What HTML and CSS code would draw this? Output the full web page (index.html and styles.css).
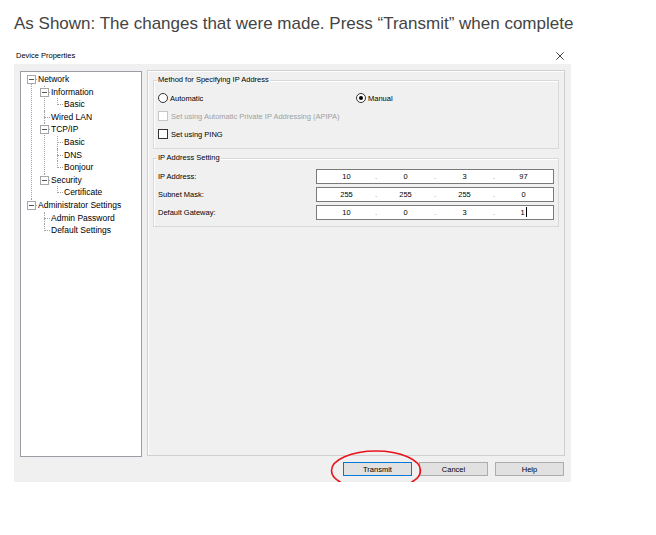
FILE: index.html
```html
<!DOCTYPE html>
<html lang="en">

<head>
    <meta charset="UTF-8">
    <title>Device Properties</title>
    <link rel="stylesheet" href="styles.css">
</head>

<body>
    <p class="intro">As Shown: The changes that were made. Press “Transmit” when complete</p>

    <div class="dialog">
        <div class="titlebar">
            <span>Device Properties</span>
            <svg class="close" width="8" height="8" viewBox="0 0 8 8">
                <path d="M0.5 0.5 L7.5 7.5 M7.5 0.5 L0.5 7.5" stroke="#444" stroke-width="1" fill="none" />
            </svg>
        </div>

        <div class="dialog-body">
            <div class="main">
                <!-- tree on the left -->
                <div class="tree">
                    <ul>
                        <li>
                            <div class="node"><span class="exp"></span>Network</div>
                            <ul>
                                <li>
                                    <div class="node"><span class="exp"></span>Information</div>
                                    <ul>
                                        <li><div class="node">Basic</div></li>
                                    </ul>
                                </li>
                                <li><div class="node">Wired LAN</div></li>
                                <li>
                                    <div class="node"><span class="exp"></span>TCP/IP</div>
                                    <ul>
                                        <li><div class="node">Basic</div></li>
                                        <li><div class="node">DNS</div></li>
                                        <li><div class="node">Bonjour</div></li>
                                    </ul>
                                </li>
                                <li>
                                    <div class="node"><span class="exp"></span>Security</div>
                                    <ul>
                                        <li><div class="node">Certificate</div></li>
                                    </ul>
                                </li>
                            </ul>
                        </li>
                        <li>
                            <div class="node"><span class="exp"></span>Administrator Settings</div>
                            <ul>
                                <li><div class="node">Admin Password</div></li>
                                <li><div class="node">Default Settings</div></li>
                            </ul>
                        </li>
                    </ul>
                </div>

                <!-- settings page -->
                <div class="panel">
                    <fieldset class="group">
                        <legend>Method for Specifying IP Address</legend>
                        <div class="row radios">
                            <label class="opt"><span class="radio"></span>Automatic</label>
                            <label class="opt"><span class="radio checked"></span>Manual</label>
                        </div>
                        <div class="row">
                            <label class="opt disabled"><span class="check"></span>Set using Automatic Private IP Addressing (APIPA)</label>
                        </div>
                        <div class="row">
                            <label class="opt"><span class="check"></span>Set using PING</label>
                        </div>
                    </fieldset>

                    <fieldset class="group">
                        <legend>IP Address Setting</legend>
                        <div class="row field">
                            <span>IP Address:</span>
                            <div class="ipbox">
                                <span class="oct">10</span><span class="dot">.</span>
                                <span class="oct">0</span><span class="dot">.</span>
                                <span class="oct">3</span><span class="dot">.</span>
                                <span class="oct">97</span>
                            </div>
                        </div>
                        <div class="row field">
                            <span>Subnet Mask:</span>
                            <div class="ipbox">
                                <span class="oct">255</span><span class="dot">.</span>
                                <span class="oct">255</span><span class="dot">.</span>
                                <span class="oct">255</span><span class="dot">.</span>
                                <span class="oct">0</span>
                            </div>
                        </div>
                        <div class="row field">
                            <span>Default Gateway:</span>
                            <div class="ipbox">
                                <span class="oct">10</span><span class="dot">.</span>
                                <span class="oct">0</span><span class="dot">.</span>
                                <span class="oct">3</span><span class="dot">.</span>
                                <span class="oct">1<span class="caret"></span></span>
                            </div>
                        </div>
                    </fieldset>
                </div>
            </div>

            <div class="buttons">
                <div class="btn-wrap">
                    <button class="btn focused">Transmit</button>
                    <!-- red mark drawn over the screenshot -->
                    <svg class="highlight" width="94" height="43" viewBox="0 0 94 43">
                        <ellipse cx="47" cy="21.5" rx="44.5" ry="19.5" fill="none" stroke="#e8141b" stroke-width="1.6" />
                    </svg>
                </div>
                <button class="btn">Cancel</button>
                <button class="btn">Help</button>
            </div>
        </div>
    </div>
</body>

</html>
```

FILE: styles.css
```css
body {
    margin: 0;
    background: #fff;
    font-family: "Liberation Sans", Arial, sans-serif;
}

.intro {
    margin: 14px 0 13px 14px;
    font-size: 17px;
    line-height: 20px;
    color: #444;
    white-space: nowrap;
}

.dialog {
    width: 557px;
    margin-left: 14px;
    background: #f0f0f0;
}

.titlebar {
    height: 17px;
    background: #fff;
    display: flex;
    align-items: center;
    justify-content: space-between;
    padding: 0 7px 0 2px;
    font-size: 7.5px;
    color: #000;
}

.close {
    display: block;
}

.dialog-body {
    padding: 6px 6px 6px 6px;
}

.main {
    display: flex;
    gap: 5px;
    align-items: flex-start;
}

/* tree view */
.tree {
    box-sizing: border-box;
    width: 122px;
    height: 386px;
    margin-top: 1px;
    background: #fff;
    border: 1px solid #9a9ea4;
    padding: 1px 0 0 4px;
    font-size: 8.5px;
    color: #000;
}

.tree ul {
    list-style: none;
    margin: 0;
    padding: 0 0 0 13px;
}

.tree > ul {
    padding: 0;
}

.tree li {
    position: relative;
}

.tree li::before {
    content: "";
    position: absolute;
    left: 6px;
    top: 6px;
    width: 6px;
    border-top: 1px dotted #a0a0a0;
}

.tree li::after {
    content: "";
    position: absolute;
    left: 6px;
    top: 0;
    bottom: 0;
    border-left: 1px dotted #a0a0a0;
}

.tree li:last-child::after {
    bottom: auto;
    height: 7px;
}

.tree > ul > li:first-child::after {
    top: 6px;
}

.node {
    position: relative;
    z-index: 1;
    height: 12.6px;
    line-height: 12.6px;
    padding-left: 13px;
    white-space: nowrap;
}

.exp {
    position: absolute;
    left: 2px;
    top: 2px;
    box-sizing: border-box;
    width: 9px;
    height: 9px;
    border: 1px solid #a6a6a6;
    background: #fff;
}

.exp::after {
    content: "";
    position: absolute;
    left: 1px;
    top: 3px;
    width: 5px;
    height: 1px;
    background: #555;
}

/* right page */
.panel {
    box-sizing: border-box;
    width: 418px;
    height: 386px;
    border: 1px solid #cfcfcf;
    box-shadow: inset 1px 1px 0 #fff;
    padding: 0 5px 0 5px;
    font-size: 7.5px;
    color: #000;
}

.group {
    margin: 4px 0 0 0;
    padding: 4px 4px 5px 4px;
    border: 1px solid #d9d9d9;
    box-shadow: 1px 1px 0 #fff inset;
}

.group legend {
    padding: 0 1px;
    margin-left: -1px;
    line-height: 10px;
}

.row {
    height: 18px;
    display: flex;
    align-items: center;
}

.radios .opt:first-child {
    width: 198px;
}

.opt {
    display: flex;
    align-items: center;
    gap: 2px;
}

.opt.disabled {
    color: #a0a0a0;
}

.radio {
    box-sizing: border-box;
    width: 10px;
    height: 10px;
    border: 1px solid #333;
    border-radius: 50%;
    background: #fff;
    position: relative;
}

.radio.checked::after {
    content: "";
    position: absolute;
    left: 2px;
    top: 2px;
    width: 4px;
    height: 4px;
    border-radius: 50%;
    background: #000;
}

.check {
    box-sizing: border-box;
    width: 10px;
    height: 10px;
    border: 1px solid #333;
    background: #fff;
    margin-right: 1px;
}

.disabled .check {
    border-color: #c6c6c6;
}

.field > span {
    width: 158px;
}

.ipbox {
    box-sizing: border-box;
    width: 238px;
    height: 15px;
    border: 1px solid #7a7a7a;
    background: #fff;
    display: flex;
    align-items: center;
}

.oct {
    flex: 1;
    text-align: center;
}

.dot {
    width: 0;
    display: flex;
    justify-content: center;
    color: #8a8a8a;
}

.caret {
    display: inline-block;
    width: 1px;
    height: 10px;
    margin-left: 1px;
    background: #000;
    vertical-align: -2px;
}

/* bottom buttons */
.buttons {
    display: flex;
    justify-content: flex-end;
    gap: 7px;
    margin-top: 5px;
    padding-right: 1px;
}

.btn-wrap {
    position: relative;
}

.btn {
    display: block;
    box-sizing: border-box;
    width: 69px;
    height: 14px;
    padding: 0;
    background: #e1e1e1;
    border: 1px solid #adadad;
    font-family: "Liberation Sans", Arial, sans-serif;
    font-size: 7.5px;
    color: #000;
}

.btn.focused {
    border-color: #0078d7;
}

.highlight {
    position: absolute;
    left: -14px;
    top: -13px;
    pointer-events: none;
}
```
